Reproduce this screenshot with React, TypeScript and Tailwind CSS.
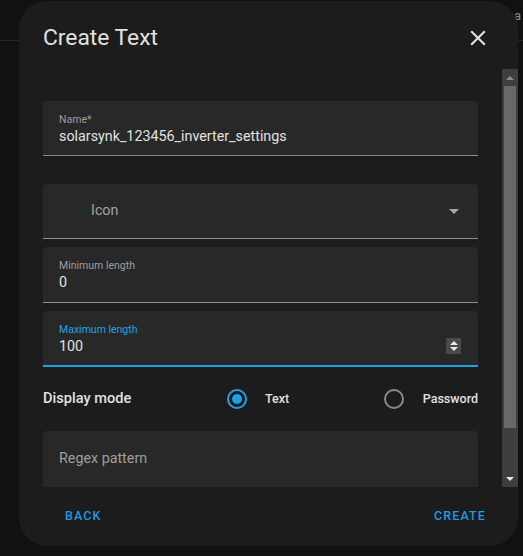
import { useState } from 'react'

const font = { fontFamily: 'Roboto, "Noto Sans", sans-serif' }

function CloseIcon() {
  return (
    <svg viewBox="0 0 24 24" className="w-[26px] h-[26px]" fill="#e1e1e1">
      <path d="M19,6.41L17.59,5L12,10.59L6.41,5L5,6.41L10.59,12L5,17.59L6.41,19L12,13.41L17.59,19L19,17.59L13.41,12L19,6.41Z" />
    </svg>
  )
}

function TextField({ label, value, focused }: { label: string; value: string; focused?: boolean }) {
  return (
    <div
      className={
        'h-[56px] rounded-t-[4px] bg-[#282828] pl-[16px] pr-[16px] pt-[12px] flex items-start justify-between ' +
        (focused ? 'border-b-2 border-[#1ea3e6]' : 'border-b border-[#8c8c8c]')
      }
    >
      <div className="flex flex-col">
        <span className={'text-[10.5px] leading-[13px] ' + (focused ? 'text-[#1ea3e6]' : 'text-[#9e9e9e]')}>
          {label}
        </span>
        <span className="text-[14.3px] leading-[20px] text-[#e1e1e1]">{value}</span>
      </div>
      {focused && (
        <div className="mt-[15px] mr-[1px] w-[15px] h-[16px] bg-[#4a4a4a] flex flex-col items-center justify-center gap-[2px]">
          <svg viewBox="0 0 8 4" className="w-[8px] h-[4px]" fill="#e8e8e8">
            <path d="M0 4 L4 0 L8 4Z" />
          </svg>
          <svg viewBox="0 0 8 4" className="w-[8px] h-[4px]" fill="#e8e8e8">
            <path d="M0 0 L8 0 L4 4Z" />
          </svg>
        </div>
      )}
    </div>
  )
}

function Radio({ checked }: { checked?: boolean }) {
  return (
    <span
      className={
        'w-[20px] h-[20px] rounded-full border-2 flex items-center justify-center ' +
        (checked ? 'border-[#1ea3e6]' : 'border-[#8a8a8a]')
      }
    >
      {checked && <span className="w-[10px] h-[10px] rounded-full bg-[#1ea3e6]" />}
    </span>
  )
}

function Scrollbar() {
  return (
    <div className="w-[16px] h-full bg-[#3e3e3e] flex flex-col">
      <div className="h-[17px] flex items-center justify-center">
        <svg viewBox="0 0 8 4" className="w-[8px] h-[4px]" fill="#8c8c8c">
          <path d="M0 4 L4 0 L8 4Z" />
        </svg>
      </div>
      <div className="mx-[2px] h-[342px] bg-[#686868]" />
      <div className="flex-1" />
      <div className="h-[17px] flex items-center justify-center">
        <svg viewBox="0 0 8 4" className="w-[8px] h-[4px]" fill="#e8e8e8">
          <path d="M0 0 L8 0 L4 4Z" />
        </svg>
      </div>
    </div>
  )
}

export default function App() {
  const [mode, setMode] = useState<'text' | 'password'>('text')

  return (
    <div className="relative w-[523px] h-[556px] bg-[#111111] overflow-hidden" style={font}>
      {/* page header behind the dialog */}
      <div className="h-[41px] border-b border-[#262626] flex justify-end items-start pt-[6px] pr-[2px]">
        <span className="text-[13px] text-[#8a8a8a]">lea</span>
      </div>

      <div className="absolute left-[19px] top-[1px] w-[499px] h-[545px] rounded-[28px] bg-[#1c1c1c] flex flex-col overflow-hidden">
        <div className="h-[68px] flex items-start justify-between pl-[24px] pr-[27px] pt-[22px]">
          <h2 className="text-[22.8px] leading-[30px] text-[#e1e1e1]">Create Text</h2>
          <button className="mt-[2px]">
            <CloseIcon />
          </button>
        </div>

        <div className="h-[418px] flex">
          <div className="flex-1 overflow-hidden px-[24px] pt-[32px] flex flex-col">
            <TextField label="Name*" value="solarsynk_123456_inverter_settings" />

            <div className="mt-[28px] h-[56px] rounded-t-[4px] bg-[#282828] border-b border-[#8c8c8c] flex items-center justify-between pl-[48px] pr-[19px]">
              <span className="text-[14.3px] text-[#a3a3a3]">Icon</span>
              <svg viewBox="0 0 10 5" className="w-[10px] h-[5px]" fill="#a8a8a8">
                <path d="M0 0 L10 0 L5 5Z" />
              </svg>
            </div>

            <div className="mt-[8px]">
              <TextField label="Minimum length" value="0" />
            </div>
            <div className="mt-[8px]">
              <TextField label="Maximum length" value="100" focused />
            </div>

            <div className="h-[64px] shrink-0 flex items-center">
              <span className="w-[184px] text-[14.6px] font-medium text-[#e1e1e1]">Display mode</span>
              <label className="flex items-center cursor-pointer" onClick={() => setMode('text')}>
                <Radio checked={mode === 'text'} />
                <span className="ml-[18px] text-[12.5px] font-medium text-[#e1e1e1]">Text</span>
              </label>
              <label className="ml-auto flex items-center cursor-pointer" onClick={() => setMode('password')}>
                <Radio checked={mode === 'password'} />
                <span className="ml-[19px] text-[12.5px] font-medium text-[#e1e1e1]">Password</span>
              </label>
            </div>

            <div className="shrink-0 h-[56px] rounded-t-[4px] bg-[#282828] flex items-center pl-[16px]">
              <span className="text-[14.3px] text-[#9e9e9e]">Regex pattern</span>
            </div>
          </div>
          <Scrollbar />
        </div>

        <div className="flex-1 flex items-center justify-between pl-[46px] pr-[32px] pb-[1px]">
          <button className="text-[12.5px] font-medium tracking-[1.1px] text-[#1e9be0]">BACK</button>
          <button className="text-[12.5px] font-medium tracking-[1.1px] text-[#1e9be0]">CREATE</button>
        </div>
      </div>
    </div>
  )
}
